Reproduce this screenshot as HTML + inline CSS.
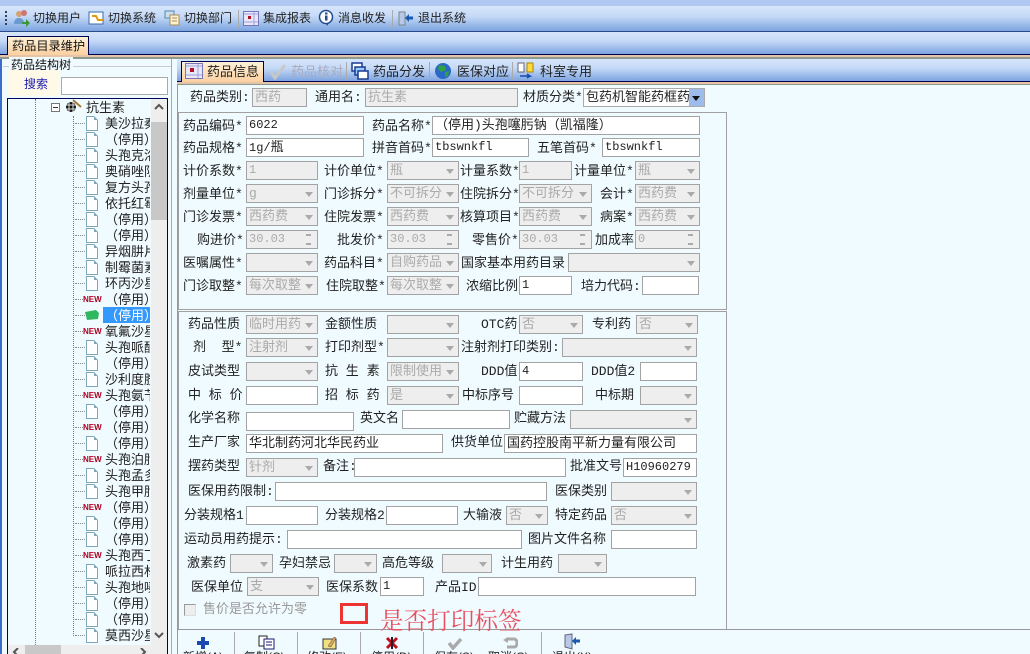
<!DOCTYPE html>
<html><head><meta charset="utf-8"><style>
html,body{margin:0;padding:0;width:1030px;height:654px;overflow:hidden}
body{position:relative;background:#f0fbff}
div,span,svg{position:absolute;box-sizing:border-box}
#r{left:0;top:0;width:1030px;height:654px;overflow:hidden;background:#f0fbff;font-family:"Liberation Sans","WenQuanYi Zen Hei","Noto Sans CJK SC",sans-serif;font-size:13px;color:#111}
.b{left:0;width:1030px}
.g{background:linear-gradient(#d6e6fb,#c6daf7 40%,#7da4e0)}
.l{white-space:nowrap;height:18px;font:13px/20px "Liberation Mono","WenQuanYi Zen Hei","Noto Sans CJK SC",monospace;color:#222}
.d{color:#999}
.i,.c,.s{height:19px;border:1px solid #a3a3a3;background:#fff;font:12px/17px "Liberation Mono","WenQuanYi Zen Hei","Noto Sans CJK SC",monospace;padding-left:2px;white-space:nowrap;overflow:hidden;color:#222}
.z{font-size:13px}
.n{background:#eee;color:#aaa}
.c,.s{background:#eee;color:#aaa}
.c{font-size:13px}
.c:after{content:"";position:absolute;right:4px;top:7px;border:4px solid transparent;border-top:5px solid #aaa;border-bottom:0}
.s:after{content:"";position:absolute;right:6px;top:3px;width:5px;height:11px;background:linear-gradient(#aaa 2px,transparent 2px,transparent 9px,#aaa 9px)}
.t{white-space:nowrap;height:16px;line-height:16px;font-size:12px}
.tb{font-size:12px;height:16px;line-height:16px;white-space:nowrap;color:#222}
.tr{left:105px;width:45px;height:16px;line-height:18px;font-size:13px;white-space:nowrap;overflow:hidden;color:#222}
.p{left:86px;width:12px;height:15px;background:#fff;border:1px solid #7fa5b8}
.p:after{content:"";position:absolute;right:-1px;top:-1px;border:2px solid;border-color:#f0fbff #f0fbff #7fa5b8 #7fa5b8}
.nw{left:83px;width:18px;height:9px;font:bold 8px/9px "Liberation Sans",sans-serif;color:#b00020}
.h{left:75px;width:10px;border-top:1px dotted #888;height:1px}
.v{width:1px;background:#aaa}
</style></head><body><div id="r">
<div class="b" style="top:0;height:6px;background:#b0c8f2"></div>
<div class="b g" style="top:6px;height:25px"></div>
<div class="b" style="top:31px;height:1px;background:#2a4a88"></div>
<div class="b g" style="top:32px;height:22px"></div>
<div class="b" style="top:54px;height:1px;background:#000050"></div>
<div class="b" style="top:55px;height:2px;background:#e6c4a8"></div>
<div class="b" style="top:57px;height:2px;background:#8f9a8f"></div>

<!-- top toolbar -->
<div style="left:5px;top:11px;width:2px;height:15px;background:repeating-linear-gradient(#345 0 2px,transparent 2px 4px)"></div>
<svg style="left:13px;top:9px" width="18" height="18" viewBox="0 0 18 18"><circle cx="6" cy="5" r="3" fill="#d9a070"/><circle cx="11" cy="4" r="3" fill="#c77"/><path d="M1 15c0-5 3-6 5-6s4 1 5 4v2z" fill="#6a9ad0"/><path d="M9 13h4v-3l4 4-4 4v-3H9z" fill="#3a9a3a"/></svg>
<div class="tb" style="left:33px;top:10px">切换用户</div>
<svg style="left:88px;top:11px" width="17" height="15" viewBox="0 0 17 15"><rect x="1" y="1" width="14" height="12" fill="#fff" stroke="#3a6ea8"/><path d="M4 5h4l2 4h5" fill="none" stroke="#e09a10" stroke-width="2"/></svg>
<div class="tb" style="left:108px;top:10px">切换系统</div>
<svg style="left:164px;top:10px" width="16" height="16" viewBox="0 0 16 16"><rect x="1" y="1" width="9" height="7" fill="#cde" stroke="#58a"/><rect x="6" y="5" width="9" height="10" fill="#fff4c8" stroke="#a86"/><path d="M8 8h5M8 11h5" stroke="#a86"/></svg>
<div class="tb" style="left:184px;top:10px">切换部门</div>
<div class="v" style="left:238px;top:10px;height:18px"></div>
<svg style="left:243px;top:11px" width="16" height="15" viewBox="0 0 16 15"><rect x=".5" y=".5" width="15" height="14" fill="#e8e8fa" stroke="#7878b8"/><rect x="5" y="5" width="3" height="3" fill="#b01020"/><path d="M1 3h14M11 1v13M1 11h14" stroke="#a0a0d8"/></svg>
<div class="tb" style="left:263px;top:10px">集成报表</div>
<svg style="left:318px;top:9px" width="16" height="18" viewBox="0 0 16 18"><circle cx="8" cy="8" r="6.5" fill="#fff" stroke="#224a90" stroke-width="1.5"/><rect x="7" y="6.5" width="2.5" height="5" fill="#224a90"/><rect x="7" y="3.5" width="2.5" height="2" fill="#224a90"/><path d="M8 14l1 3 2-3" fill="#224a90"/></svg>
<div class="tb" style="left:338px;top:10px">消息收发</div>
<div class="v" style="left:392px;top:10px;height:18px"></div>
<svg style="left:398px;top:10px" width="16" height="16" viewBox="0 0 16 16"><path d="M1 2h6v13H1z" fill="#b8c8e8" stroke="#788"/><path d="M7 8l4-4v2.5h4v3h-4V12z" fill="#1a5ab0"/></svg>
<div class="tb" style="left:418px;top:10px">退出系统</div>

<!-- main tab -->
<div style="left:7px;top:36px;width:82px;height:19px;background:linear-gradient(#fff2d8,#fbd0a0);border:1px solid #000050;border-bottom:0;font-size:12.2px;line-height:19px;padding-left:4px;white-space:nowrap">药品目录维护</div>

<!-- left -->
<div style="left:0;top:59px;width:2px;height:595px;background:#3a6ec8"></div>
<div style="left:3px;top:66px;width:168px;height:1px;background:#ccc"></div>
<div style="left:171px;top:59px;width:1px;height:595px;background:#aaa"></div>
<div class="t" style="left:9px;top:57px;background:#f0fbff;padding:0 2px">药品结构树</div>
<div style="left:8px;top:70px;width:52px;height:26px;background:#fff9e8"></div>
<div class="t" style="left:24px;top:76px;color:#1a1ab0;font-size:12px">搜索</div>
<div style="left:61px;top:77px;width:107px;height:18px;border:1px solid #aaa;background:#fff"></div>

<div style="left:7px;top:98px;width:161px;height:556px;border:1px solid #000060;border-bottom:0;background:#f0fbff"></div>
<div style="left:35px;top:99px;width:1px;height:546px;border-left:1px dotted #777"></div>
<div style="left:73px;top:116px;width:1px;height:520px;border-left:1px dotted #777"></div>
<div style="left:51px;top:103px;width:9px;height:9px;border:1px solid #777;background:#fff"></div>
<div style="left:53px;top:107px;width:5px;height:1px;background:#333"></div>
<svg style="left:65px;top:99px" width="18" height="17" viewBox="0 0 18 17"><circle cx="6" cy="8" r="5" fill="#111"/><path d="M1 6h10M1 10h10M4 3v10M8 3v10" stroke="#ddd" stroke-width="1"/><path d="M8 1l8 7" stroke="#a87838" stroke-width="2"/></svg>
<div class="tr" style="left:86px;top:99px;width:60px">抗生素</div>

<div class="h" style="top:123px"></div><div class="p" style="top:116px"></div><div class="tr" style="top:115px">美沙拉秦</div>
<div class="h" style="top:139px"></div><div class="p" style="top:132px"></div><div class="tr" style="top:131px">（停用）</div>
<div class="h" style="top:155px"></div><div class="p" style="top:148px"></div><div class="tr" style="top:147px">头孢克洛</div>
<div class="h" style="top:171px"></div><div class="p" style="top:164px"></div><div class="tr" style="top:163px">奥硝唑阴</div>
<div class="h" style="top:187px"></div><div class="p" style="top:180px"></div><div class="tr" style="top:179px">复方头孢</div>
<div class="h" style="top:203px"></div><div class="p" style="top:196px"></div><div class="tr" style="top:195px">依托红霉</div>
<div class="h" style="top:219px"></div><div class="p" style="top:212px"></div><div class="tr" style="top:211px">（停用）</div>
<div class="h" style="top:235px"></div><div class="p" style="top:228px"></div><div class="tr" style="top:227px">（停用）头</div>
<div class="h" style="top:251px"></div><div class="p" style="top:244px"></div><div class="tr" style="top:243px">异烟肼片</div>
<div class="h" style="top:267px"></div><div class="p" style="top:260px"></div><div class="tr" style="top:259px">制霉菌素</div>
<div class="h" style="top:283px"></div><div class="p" style="top:276px"></div><div class="tr" style="top:275px">环丙沙星</div>
<div class="h" style="top:299px"></div><div class="nw" style="top:295px">NEW</div><div class="tr" style="top:291px">（停用）</div>
<div class="h" style="top:315px"></div><svg style="left:84px;top:309px" width="16" height="12" viewBox="0 0 16 12"><path d="M1 3l11-2 3 3-1 6-11 1z" fill="#30b860"/></svg><div class="tr" style="top:307px;left:103px;width:47px;background:#3399ff;color:#fff;padding-left:2px">（停用）头</div>
<div class="h" style="top:331px"></div><div class="nw" style="top:327px">NEW</div><div class="tr" style="top:323px">氧氟沙星</div>
<div class="h" style="top:347px"></div><div class="p" style="top:340px"></div><div class="tr" style="top:339px">头孢哌酮</div>
<div class="h" style="top:363px"></div><div class="p" style="top:356px"></div><div class="tr" style="top:355px">（停用）于</div>
<div class="h" style="top:379px"></div><div class="p" style="top:372px"></div><div class="tr" style="top:371px">沙利度胺</div>
<div class="h" style="top:395px"></div><div class="nw" style="top:391px">NEW</div><div class="tr" style="top:387px">头孢氨苄</div>
<div class="h" style="top:411px"></div><div class="p" style="top:404px"></div><div class="tr" style="top:403px">（停用）</div>
<div class="h" style="top:427px"></div><div class="nw" style="top:423px">NEW</div><div class="tr" style="top:419px">（停用）头</div>
<div class="h" style="top:443px"></div><div class="p" style="top:436px"></div><div class="tr" style="top:435px">（停用）</div>
<div class="h" style="top:459px"></div><div class="nw" style="top:455px">NEW</div><div class="tr" style="top:451px">头孢泊肟</div>
<div class="h" style="top:475px"></div><div class="p" style="top:468px"></div><div class="tr" style="top:467px">头孢孟多</div>
<div class="h" style="top:491px"></div><div class="p" style="top:484px"></div><div class="tr" style="top:483px">头孢甲肟</div>
<div class="h" style="top:507px"></div><div class="nw" style="top:503px">NEW</div><div class="tr" style="top:499px">（停用）</div>
<div class="h" style="top:523px"></div><div class="p" style="top:516px"></div><div class="tr" style="top:515px">（停用）呈</div>
<div class="h" style="top:539px"></div><div class="p" style="top:532px"></div><div class="tr" style="top:531px">（停用）</div>
<div class="h" style="top:555px"></div><div class="nw" style="top:551px">NEW</div><div class="tr" style="top:547px">头孢西丁</div>
<div class="h" style="top:571px"></div><div class="p" style="top:564px"></div><div class="tr" style="top:563px">哌拉西林</div>
<div class="h" style="top:587px"></div><div class="p" style="top:580px"></div><div class="tr" style="top:579px">头孢地嗪</div>
<div class="h" style="top:603px"></div><div class="p" style="top:596px"></div><div class="tr" style="top:595px">（停用）</div>
<div class="h" style="top:619px"></div><div class="p" style="top:612px"></div><div class="tr" style="top:611px">（停用）</div>
<div class="h" style="top:635px"></div><div class="p" style="top:628px"></div><div class="tr" style="top:627px">莫西沙星</div>

<div style="left:151px;top:99px;width:16px;height:546px;background:#eee"></div>
<div style="left:151px;top:122px;width:16px;height:98px;background:#c8c8c8"></div>
<svg style="left:153px;top:103px" width="12" height="8"><path d="M2 6l4-4 4 4" fill="none" stroke="#555" stroke-width="2"/></svg>
<svg style="left:153px;top:631px" width="12" height="8"><path d="M2 2l4 4 4-4" fill="none" stroke="#555" stroke-width="2"/></svg>
<div style="left:8px;top:645px;width:159px;height:9px;background:#eee"></div>
<div style="left:25px;top:645px;width:36px;height:9px;background:#c8c8c8"></div>
<svg style="left:12px;top:648px" width="10" height="6"><path d="M6 0L2 4l4 4" fill="none" stroke="#555" stroke-width="2"/></svg>
<svg style="left:138px;top:648px" width="10" height="6"><path d="M3 0l4 4-4 4" fill="none" stroke="#555" stroke-width="2"/></svg>

<!-- inner tabs -->
<div class="b g" style="left:177px;width:853px;top:59px;height:22px"></div>
<div class="b" style="top:81px;height:1px;background:#000050;left:177px;width:853px"></div>
<div class="b" style="top:82px;height:2px;background:#e6c4a8;left:177px;width:853px"></div>
<div class="b" style="top:84px;height:1px;background:#8f9a8f;left:177px;width:853px"></div>
<div style="left:181px;top:61px;width:83px;height:21px;background:linear-gradient(#fff2d8,#fbd0a0);border:1px solid #000050;border-bottom:0"></div>
<svg style="left:185px;top:63px" width="18" height="16" viewBox="0 0 18 16"><rect x=".5" y=".5" width="17" height="15" fill="#e8e8fa" stroke="#7878b8"/><rect x="5" y="5" width="4" height="4" fill="#b01020"/><path d="M1 3h16M13 1v14M1 12h16" stroke="#a0a0d8"/></svg>
<div class="l" style="left:207px;top:63px">药品信息</div>
<svg style="left:269px;top:63px" width="18" height="17"><path d="M2 9l4 6L16 2" fill="none" stroke="#c8c8c8" stroke-width="3"/></svg>
<div class="l" style="left:291px;top:63px;color:#aab">药品核对</div>
<div class="v" style="left:346px;top:62px;height:18px"></div>
<svg style="left:351px;top:62px" width="18" height="18" viewBox="0 0 18 18"><rect x="1" y="1" width="10" height="8" fill="#fff" stroke="#1a3a90" stroke-width="1.5"/><rect x="4" y="5" width="10" height="8" fill="#9cf" stroke="#1a3a90" stroke-width="1.5"/><rect x="7" y="9" width="10" height="8" fill="#fff" stroke="#1a3a90" stroke-width="1.5"/></svg>
<div class="l" style="left:373px;top:63px">药品分发</div>
<div class="v" style="left:429px;top:62px;height:18px"></div>
<svg style="left:434px;top:62px" width="18" height="18" viewBox="0 0 18 18"><circle cx="9" cy="9" r="8" fill="#2a68c8"/><path d="M5 3l6 1 1 4-5 2-3-3zM11 10l4-1-1 5-3 1z" fill="#30a040"/></svg>
<div class="l" style="left:457px;top:63px">医保对应</div>
<div class="v" style="left:512px;top:62px;height:18px"></div>
<svg style="left:517px;top:62px" width="18" height="18" viewBox="0 0 18 18"><rect x="1" y="1" width="6" height="9" fill="#fff" stroke="#667"/><rect x="10" y="1" width="6" height="9" fill="#ffd840" stroke="#a80"/><path d="M3 14h10l-3-2M13 14l-3 2" fill="none" stroke="#1a4ab0" stroke-width="1.5"/></svg>
<div class="l" style="left:540px;top:63px">科室专用</div>

<!-- frames -->
<div style="left:177px;top:85px;width:1px;height:569px;background:#999"></div>
<div style="left:178px;top:112px;width:549px;height:198px;border:1px solid #a0a0a0"></div>
<div style="left:178px;top:311px;width:549px;height:318px;border:1px solid #a0a0a0;border-bottom:0"></div>
<div style="left:177px;top:629px;width:853px;height:1px;background:#999"></div>

<!-- row 0 -->
<div class="l" style="left:190px;top:88px">药品类别:</div><div class="i n z" style="left:252px;top:88px;width:55px">西药</div>
<div class="l" style="left:315px;top:88px">通用名:</div><div class="i n z" style="left:365px;top:88px;width:153px">抗生素</div>
<div class="l" style="left:523px;top:88px">材质分类*</div><div class="i z" style="left:583px;top:88px;width:122px;border-color:#aaa">包药机智能药框药</div>
<div style="left:689px;top:89px;width:15px;height:17px;background:#9dbcec"></div><div style="left:692px;top:96px;border:4px solid transparent;border-top:5px solid #111;border-bottom:0"></div>

<!-- panel 1 -->
<div class="l" style="left:183px;top:117px">药品编码*</div><div class="i" style="left:246px;top:116px;width:118px">6022</div>
<div class="l" style="left:372px;top:117px">药品名称*</div><div class="i z" style="left:432px;top:116px;width:268px">（停用)头孢噻肟钠（凯福隆）</div>
<div class="l" style="left:183px;top:139px">药品规格*</div><div class="i" style="left:246px;top:138px;width:118px">1g/<span style="position:static;font-size:13px">瓶</span></div>
<div class="l" style="left:372px;top:139px">拼音首码*</div><div class="i" style="left:432px;top:138px;width:97px">tbswnkfl</div>
<div class="l" style="left:537px;top:139px">五笔首码*</div><div class="i" style="left:602px;top:138px;width:98px">tbswnkfl</div>

<div class="l" style="left:183px;top:162px">计价系数*</div><div class="i n" style="left:246px;top:161px;width:72px">1</div>
<div class="l" style="left:324px;top:162px">计价单位*</div><div class="c" style="left:387px;top:161px;width:72px">瓶</div>
<div class="l" style="left:460px;top:162px">计量系数*</div><div class="i n" style="left:519px;top:161px;width:53px">1</div>
<div class="l" style="left:574px;top:162px">计量单位*</div><div class="c" style="left:635px;top:161px;width:65px">瓶</div>

<div class="l" style="left:183px;top:185px">剂量单位*</div><div class="c" style="left:246px;top:184px;width:72px">g</div>
<div class="l" style="left:324px;top:185px">门诊拆分*</div><div class="c" style="left:387px;top:184px;width:72px">不可拆分</div>
<div class="l" style="left:460px;top:185px">住院拆分*</div><div class="c" style="left:519px;top:184px;width:73px">不可拆分</div>
<div class="l" style="left:600px;top:185px">会计*</div><div class="c" style="left:635px;top:184px;width:65px">西药费</div>

<div class="l" style="left:183px;top:208px">门诊发票*</div><div class="c" style="left:246px;top:207px;width:72px">西药费</div>
<div class="l" style="left:324px;top:208px">住院发票*</div><div class="c" style="left:387px;top:207px;width:72px">西药费</div>
<div class="l" style="left:460px;top:208px">核算项目*</div><div class="c" style="left:519px;top:207px;width:73px">西药费</div>
<div class="l" style="left:600px;top:208px">病案*</div><div class="c" style="left:635px;top:207px;width:65px">西药费</div>

<div class="l" style="left:197px;top:231px">购进价*</div><div class="s" style="left:246px;top:230px;width:72px">30.03</div>
<div class="l" style="left:337px;top:231px">批发价*</div><div class="s" style="left:387px;top:230px;width:72px">30.03</div>
<div class="l" style="left:472px;top:231px">零售价*</div><div class="s" style="left:519px;top:230px;width:73px">30.03</div>
<div class="l" style="left:595px;top:231px">加成率</div><div class="s" style="left:635px;top:230px;width:65px">0</div>

<div class="l" style="left:183px;top:254px">医嘱属性*</div><div class="c" style="left:246px;top:253px;width:72px"></div>
<div class="l" style="left:324px;top:254px">药品科目*</div><div class="c" style="left:387px;top:253px;width:72px">自购药品</div>
<div class="l" style="left:461px;top:254px">国家基本用药目录</div><div class="c" style="left:568px;top:253px;width:132px"></div>

<div class="l" style="left:183px;top:277px">门诊取整*</div><div class="c" style="left:246px;top:276px;width:72px">每次取整</div>
<div class="l" style="left:326px;top:277px">住院取整*</div><div class="c" style="left:387px;top:276px;width:72px">每次取整</div>
<div class="l" style="left:466px;top:277px">浓缩比例</div><div class="i" style="left:519px;top:276px;width:53px">1</div>
<div class="l" style="left:581px;top:277px">培力代码:</div><div class="i" style="left:642px;top:276px;width:57px"></div>

<!-- panel 2 -->
<div class="l" style="left:188px;top:315px">药品性质</div><div class="c" style="left:246px;top:315px;width:72px">临时用药</div>
<div class="l" style="left:325px;top:315px">金额性质</div><div class="c" style="left:387px;top:315px;width:72px"></div>
<div class="l" style="left:481px;top:315px">OTC药</div><div class="c" style="left:519px;top:315px;width:64px">否</div>
<div class="l" style="left:592px;top:315px">专利药</div><div class="c" style="left:636px;top:315px;width:62px">否</div>

<div class="l" style="left:193px;top:338px">剂&nbsp;&nbsp;型*</div><div class="c" style="left:246px;top:338px;width:72px">注射剂</div>
<div class="l" style="left:325px;top:338px">打印剂型*</div><div class="c" style="left:387px;top:338px;width:72px"></div>
<div class="l" style="left:461px;top:338px">注射剂打印类别:</div><div class="c" style="left:562px;top:338px;width:135px"></div>

<div class="l" style="left:188px;top:362px">皮试类型</div><div class="c" style="left:246px;top:362px;width:72px"></div>
<div class="l" style="left:325px;top:362px">抗 生 素</div><div class="c" style="left:387px;top:362px;width:72px">限制使用</div>
<div class="l" style="left:481px;top:362px">DDD值</div><div class="i" style="left:519px;top:362px;width:64px">4</div>
<div class="l" style="left:591px;top:362px">DDD值2</div><div class="i" style="left:640px;top:362px;width:57px"></div>

<div class="l" style="left:188px;top:386px">中 标 价</div><div class="i" style="left:246px;top:386px;width:72px"></div>
<div class="l" style="left:325px;top:386px">招 标 药</div><div class="c" style="left:387px;top:386px;width:72px">是</div>
<div class="l" style="left:462px;top:386px">中标序号</div><div class="i" style="left:519px;top:386px;width:64px"></div>
<div class="l" style="left:595px;top:386px">中标期</div><div class="c" style="left:640px;top:386px;width:57px"></div>

<div class="l" style="left:188px;top:409px">化学名称</div><div class="i" style="left:246px;top:412px;width:108px"></div>
<div class="l" style="left:360px;top:409px">英文名</div><div class="i" style="left:402px;top:410px;width:108px"></div>
<div class="l" style="left:514px;top:409px">贮藏方法</div><div class="c" style="left:570px;top:410px;width:127px"></div>

<div class="l" style="left:188px;top:433px">生产厂家</div><div class="i z" style="left:246px;top:434px;width:197px">华北制药河北华民药业</div>
<div class="l" style="left:451px;top:433px">供货单位</div><div class="i z" style="left:504px;top:434px;width:193px">国药控股南平新力量有限公司</div>

<div class="l" style="left:188px;top:457px">摆药类型</div><div class="c" style="left:246px;top:458px;width:72px">针剂</div>
<div class="l" style="left:323px;top:457px">备注:</div><div class="i" style="left:354px;top:458px;width:212px"></div>
<div class="l" style="left:570px;top:457px">批准文号</div><div class="i" style="left:623px;top:458px;width:74px">H10960279</div>

<div class="l" style="left:188px;top:482px">医保用药限制:</div><div class="i" style="left:275px;top:482px;width:272px"></div>
<div class="l" style="left:555px;top:482px">医保类别</div><div class="c" style="left:611px;top:482px;width:86px"></div>

<div class="l" style="left:184px;top:506px">分装规格1</div><div class="i" style="left:246px;top:506px;width:72px"></div>
<div class="l" style="left:325px;top:506px">分装规格2</div><div class="i" style="left:386px;top:506px;width:72px"></div>
<div class="l" style="left:463px;top:506px">大输液</div><div class="c" style="left:506px;top:506px;width:42px">否</div>
<div class="l" style="left:555px;top:506px">特定药品</div><div class="c" style="left:611px;top:506px;width:86px">否</div>

<div class="l" style="left:184px;top:530px">运动员用药提示:</div><div class="i" style="left:287px;top:530px;width:235px"></div>
<div class="l" style="left:528px;top:530px">图片文件名称</div><div class="i" style="left:611px;top:530px;width:86px"></div>

<div class="l" style="left:187px;top:554px">激素药</div><div class="c" style="left:230px;top:554px;width:43px"></div>
<div class="l" style="left:279px;top:554px">孕妇禁忌</div><div class="c" style="left:334px;top:554px;width:43px"></div>
<div class="l" style="left:382px;top:554px">高危等级</div><div class="c" style="left:442px;top:554px;width:50px"></div>
<div class="l" style="left:501px;top:554px">计生用药</div><div class="c" style="left:558px;top:554px;width:49px"></div>

<div class="l" style="left:191px;top:578px">医保单位</div><div class="c" style="left:247px;top:577px;width:72px">支</div>
<div class="l" style="left:326px;top:578px">医保系数</div><div class="i" style="left:380px;top:577px;width:44px">1</div>
<div class="l" style="left:435px;top:578px">产品ID</div><div class="i" style="left:478px;top:577px;width:218px"></div>

<div style="left:184px;top:604px;width:12px;height:12px;background:#eee;border:1px solid #999;border-right-color:#ddd;border-bottom-color:#ddd"></div>
<div class="l d" style="left:203px;top:600px">售价是否允许为零</div>
<div style="left:340px;top:603px;width:28px;height:21px;border:3px solid #ee3333"></div>
<div style="left:380px;top:605px;height:28px;font:23.6px/28px 'Noto Serif CJK SC',serif;color:#e85060;white-space:nowrap">是否打印标签</div>

<!-- bottom toolbar -->
<div class="v" style="left:234px;top:632px;height:22px"></div>
<div class="v" style="left:297px;top:632px;height:22px"></div>
<div class="v" style="left:360px;top:632px;height:22px"></div>
<div class="v" style="left:423px;top:632px;height:22px"></div>
<div class="v" style="left:541px;top:632px;height:22px"></div>
<svg style="left:196px;top:636px" width="14" height="14"><path d="M5 1h4v4h4v4H9v4H5V9H1V5h4z" fill="#1a4ab0"/></svg>
<svg style="left:258px;top:635px" width="18" height="15"><rect x="1" y="1" width="8" height="10" fill="#fff" stroke="#222"/><rect x="6" y="4" width="10" height="10" fill="#fff" stroke="#1a1a70"/><path d="M8 7h6M8 10h6" stroke="#1a1a70"/></svg>
<svg style="left:322px;top:634px" width="16" height="16"><rect x="1" y="5" width="13" height="10" fill="#f0e080" stroke="#333"/><path d="M6 12l6-9 2 1-5 9z" fill="#e0a060" stroke="#555" stroke-width=".5"/></svg>
<svg style="left:385px;top:636px" width="14" height="14"><path d="M2 2l10 10M12 2L2 12" stroke="#c01020" stroke-width="3"/><rect x="6" y="1" width="2" height="12" fill="#222"/></svg>
<svg style="left:447px;top:636px" width="16" height="14"><path d="M2 7l4 5 8-9" fill="none" stroke="#aaa" stroke-width="3.5"/></svg>
<svg style="left:502px;top:636px" width="16" height="14"><path d="M6 3h6c2 0 3 2 3 4s-1 4-3 4H5" fill="none" stroke="#aaa" stroke-width="3"/><path d="M1 4l5-3v6z" fill="#aaa"/></svg>
<svg style="left:564px;top:633px" width="16" height="17"><path d="M1 2l7-1v15l-7-2z" fill="#b8c8e8" stroke="#667"/><path d="M8 8l4-4v2.5h4v3h-4V12z" fill="#1a5ab0"/></svg>
<div class="tb" style="left:183px;top:649px">新增(A)</div>
<div class="tb" style="left:244px;top:649px">复制(C)</div>
<div class="tb" style="left:307px;top:649px">修改(E)</div>
<div class="tb" style="left:371px;top:649px">停用(D)</div>
<div class="tb d" style="left:434px;top:649px">保存(S)</div>
<div class="tb d" style="left:488px;top:649px">取消(C)</div>
<div class="tb" style="left:552px;top:649px">退出(X)</div>
</div></body></html>
